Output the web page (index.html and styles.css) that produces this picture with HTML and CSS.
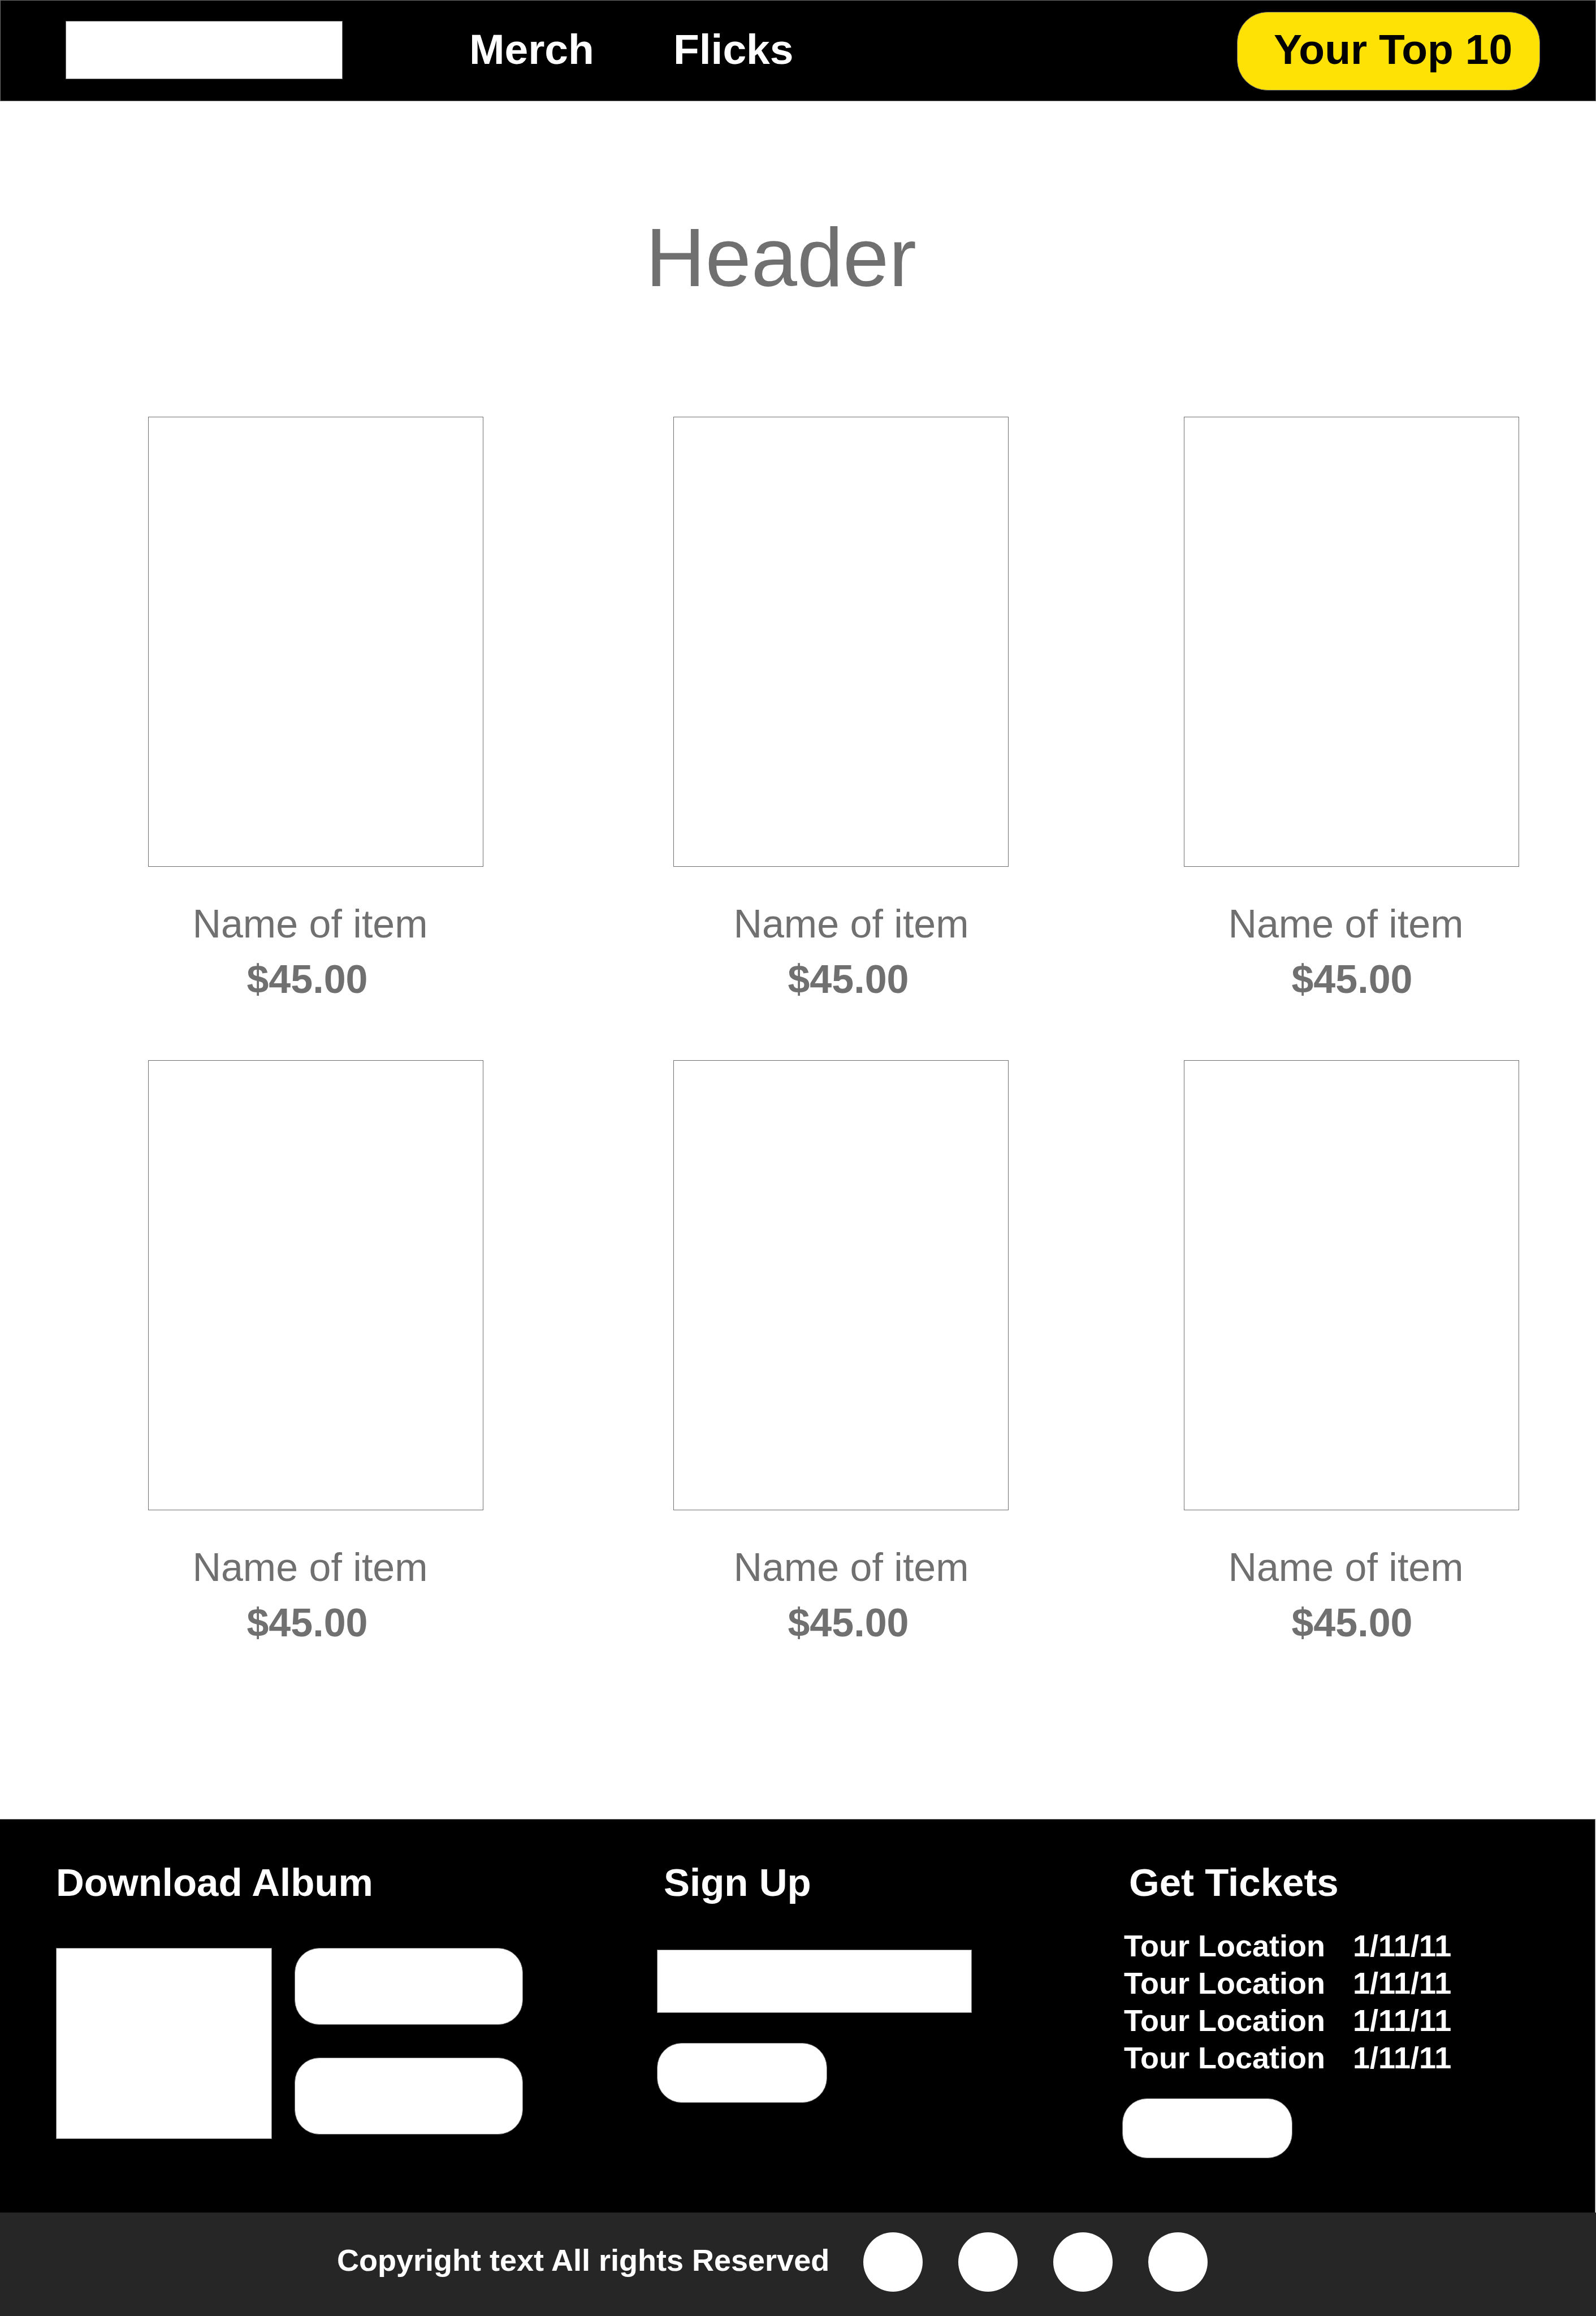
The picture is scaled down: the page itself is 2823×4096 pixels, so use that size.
FILE: index.html
```html
<!DOCTYPE html>
<html lang="en">
<head>
  <meta charset="utf-8">
  <meta name="viewport" content="width=device-width, initial-scale=1">
  <title>Merch</title>
  <link rel="stylesheet" href="styles.css">
</head>
<body>
  <header class="topbar">
    <a class="logo" href="#" aria-label="Home"></a>
    <nav class="nav">
      <a href="#">Merch</a>
      <a href="#">Flicks</a>
    </nav>
    <button class="top-ten" type="button">Your Top 10</button>
  </header>

  <main>
    <h1 class="title">Header</h1>
    <section class="products" aria-label="Products">
      <article class="product"><div class="thumb"></div><p class="name">Name of item</p><p class="price">$45.00</p></article>
      <article class="product"><div class="thumb"></div><p class="name">Name of item</p><p class="price">$45.00</p></article>
      <article class="product"><div class="thumb"></div><p class="name">Name of item</p><p class="price">$45.00</p></article>
      <article class="product"><div class="thumb"></div><p class="name">Name of item</p><p class="price">$45.00</p></article>
      <article class="product"><div class="thumb"></div><p class="name">Name of item</p><p class="price">$45.00</p></article>
      <article class="product"><div class="thumb"></div><p class="name">Name of item</p><p class="price">$45.00</p></article>
    </section>
  </main>

  <footer>
    <div class="panels">
      <section class="album">
        <h2>Download Album</h2>
        <div class="album-row">
          <div class="cover"></div>
          <div class="stores">
            <button class="pill pill-large" type="button" aria-label="First store"></button>
            <button class="pill pill-large" type="button" aria-label="Second store"></button>
          </div>
        </div>
      </section>
      <form class="signup">
        <h2><label for="email">Sign Up</label></h2>
        <input class="field" id="email" type="email">
        <button class="pill" type="button" aria-label="Submit"></button>
      </form>
      <section class="tickets">
        <h2>Get Tickets</h2>
        <table class="dates">
          <tbody>
            <tr><td>Tour Location</td><td>1/11/11</td></tr>
            <tr><td>Tour Location</td><td>1/11/11</td></tr>
            <tr><td>Tour Location</td><td>1/11/11</td></tr>
            <tr><td>Tour Location</td><td>1/11/11</td></tr>
          </tbody>
        </table>
        <button class="pill" type="button" aria-label="Tickets"></button>
      </section>
    </div>
    <div class="legal">
      <p class="copyright">Copyright text All rights Reserved</p>
      <nav class="social" aria-label="Social">
        <a href="#" aria-label="Facebook"></a>
        <a href="#" aria-label="Twitter"></a>
        <a href="#" aria-label="Instagram"></a>
        <a href="#" aria-label="YouTube"></a>
      </nav>
    </div>
  </footer>
</body>
</html>
```
FILE: styles.css
```css
* { box-sizing: border-box; }

body {
  margin: 0;
  background: #fff;
  color: #707070;
  font-family: "Liberation Sans", Arial, Helvetica, sans-serif;
}

h1, h2, p { margin: 0; }
a { color: inherit; text-decoration: none; }

.topbar {
  display: flex;
  align-items: center;
  padding: 20px 98px 18px 115px;
  background: #000;
  border: 1px solid #707070;
}

.logo {
  width: 490px;
  height: 103px;
  margin-bottom: 4px;
  background: #fff;
  border: 1px solid #707070;
}

.nav {
  display: flex;
  gap: 140px;
  margin-left: 224px;
  padding-bottom: 8px;
  color: #fff;
  font-size: 75px;
  font-weight: 700;
  line-height: 88px;
}

.top-ten {
  width: 536px;
  height: 139px;
  margin-left: auto;
  padding: 0 0 8px 16px;
  background: #ffe205;
  border: 1px solid #707070;
  border-radius: 54px;
  color: #000;
  font: 700 75px/88px "Liberation Sans", Arial, Helvetica, sans-serif;
}

.title {
  margin: 193px 0 197px;
  padding-right: 60px;
  font-size: 146px;
  font-weight: 400;
  line-height: 168px;
  text-align: center;
}

.products {
  display: grid;
  grid-template-columns: 929fr 903fr 593fr;
  row-gap: 94px;
  padding: 0 136px 298px 262px;
}

.product {
  width: 593px;
  max-width: 100%;
  font-size: 70px;
  line-height: 98px;
  text-align: center;
}

.thumb {
  height: 796px;
  margin-bottom: 52px;
  border: 1px solid #707070;
}

.name { padding-right: 20px; }
.price { padding-right: 30px; font-weight: 700; }
.product:nth-child(3n+2) .name { padding: 0 0 0 36px; }
.product:nth-child(3n+2) .price { padding: 0 0 0 26px; }
.product:nth-child(3n) .price { padding: 0 0 0 2px; }

.panels {
  display: grid;
  grid-template-columns: 1063fr 823fr 738fr;
  margin-right: 1px;
  padding: 72px 98px 96px 99px;
  background: #000;
  border: solid #707070;
  border-width: 1px 1px 0 0;
  color: #fff;
}

.panels h2 {
  font-size: 69px;
  font-weight: 700;
  line-height: 80px;
}

.signup h2,
.tickets h2 { padding-left: 12px; }

.album-row {
  display: flex;
  align-items: flex-start;
  gap: 40px;
  margin-top: 75px;
}

.cover {
  width: 382px;
  height: 338px;
  background: #fff;
  border: 1px solid #707070;
}

.stores {
  display: flex;
  flex-direction: column;
  gap: 58px;
}

.pill {
  display: block;
  width: 301px;
  height: 106px;
  padding: 0;
  background: #fff;
  border: 1px solid #707070;
  border-radius: 44px;
}

.pill-large {
  width: 404px;
  height: 136px;
}

.field {
  display: block;
  width: 557px;
  height: 112px;
  margin: 78px 0 53px;
  padding: 0 24px;
  background: #fff;
  border: 1px solid #707070;
  border-radius: 0;
  font: 400 54px/66px "Liberation Sans", Arial, Helvetica, sans-serif;
}

.dates {
  margin: 38px 0 39px;
  border-collapse: collapse;
  font-size: 54px;
  font-weight: 700;
  line-height: 66px;
}

.dates td { padding: 0 46px 0 3px; }

.legal {
  display: flex;
  align-items: flex-start;
  gap: 60px;
  padding: 35px 98px 43px 596px;
  background: #262626;
}

.copyright {
  color: #fff;
  font-size: 54px;
  font-weight: 700;
  line-height: 98px;
}

.social {
  display: flex;
  gap: 63px;
}

.social a {
  width: 105px;
  height: 105px;
  background: #fff;
  border-radius: 50%;
}
```
